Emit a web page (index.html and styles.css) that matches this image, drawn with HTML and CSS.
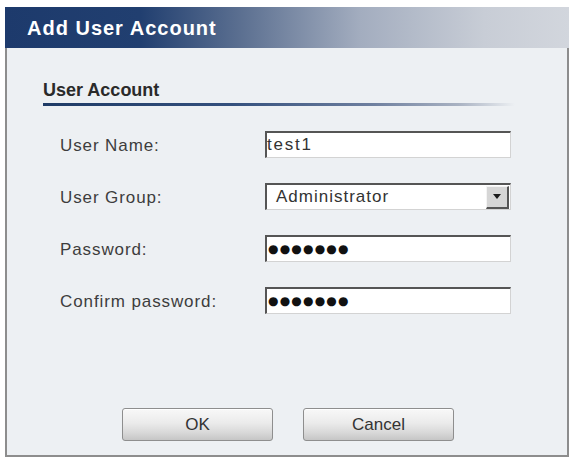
FILE: index.html
```html
<!DOCTYPE html>
<html>
<head>
<meta charset="utf-8">
<link rel="stylesheet" href="styles.css">
</head>
<body>
<div class="dialog">
  <div class="titlebar">Add User Account</div>
  <div class="content">
    <div class="section-title">User Account</div>
    <div class="section-rule"></div>
    <div class="form">
      <label class="label" for="uname">User Name:</label>
      <input class="field" id="uname" type="text" value="test1">
      <label class="label">User Group:</label>
      <div class="combo"><span class="combo-text">Administrator</span><span class="combo-btn"><span class="tri"></span></span></div>
      <label class="label" for="pw">Password:</label>
      <div class="field pw" id="pw">●●●●●●●</div>
      <label class="label" for="pw2">Confirm password:</label>
      <div class="field pw" id="pw2">●●●●●●●</div>
    </div>
    <div class="buttons">
      <button class="btn">OK</button>
      <button class="btn">Cancel</button>
    </div>
  </div>
</div>
</body>
</html>
```
FILE: styles.css
```css
html, body {
  margin: 0;
  padding: 0;
  background: #ffffff;
}
body {
  font-family: "Liberation Sans", Arial, sans-serif;
}
.dialog {
  box-sizing: border-box;
  margin: 7px 0 0 5px;
  width: 564px;
  height: 450px;
  border: 2px solid #8d8d8d;
  border-top-width: 0;
  background: #edf0f3;
  display: flex;
  flex-direction: column;
}
.titlebar {
  height: 41px;
  line-height: 43px;
  padding-left: 22px;
  font-size: 20px;
  font-weight: bold;
  letter-spacing: 1px;
  color: #ffffff;
  background: linear-gradient(to right, #1d3a6c 0%, #213f70 24%, #5c7091 42%, #a3adbf 63%, #c8cdd6 85%, #d2d6dd 100%);
  margin: 0 -2px;
}
.content {
  flex: 1;
  display: flex;
  flex-direction: column;
  padding: 32px 0 14px 36px;
}
.section-title {
  font-size: 18px;
  font-weight: bold;
  line-height: 20px;
  color: #2a2a2a;
}
.section-rule {
  margin-top: 3px;
  width: 472px;
  height: 3px;
  background: linear-gradient(to right, #1f3b66 0%, #34507d 40%, #6f809f 70%, #a9b2c2 88%, rgba(220,224,230,0) 100%);
}
.form {
  margin: 25px 0 0 17px;
  display: grid;
  grid-template-columns: 205px 246px;
  grid-auto-rows: 27px;
  row-gap: 25px;
  align-items: center;
}
.label {
  padding-top: 3px;
  font-size: 17px;
  letter-spacing: 0.9px;
  color: #3d3d3d;
}
.field {
  box-sizing: border-box;
  height: 27px;
  width: 246px;
  margin: 0;
  background: #ffffff;
  border-style: solid;
  border-width: 2px 1px 1px 2px;
  border-color: #555555 #d3d3d3 #d3d3d3 #555555;
  font-family: "Liberation Sans", Arial, sans-serif;
  font-size: 17px;
  letter-spacing: 1.8px;
  color: #333333;
  padding: 0;
  outline: none;
}
.pw {
  display: flex;
  align-items: center;
  padding-left: 1px;
  font-family: "DejaVu Sans", sans-serif;
  font-size: 12px;
  letter-spacing: 1.2px;
  color: #111111;
}
.combo {
  box-sizing: border-box;
  height: 27px;
  width: 246px;
  display: flex;
  align-items: center;
  background: #ffffff;
  border-style: solid;
  border-width: 2px 1px 1px 2px;
  border-color: #555555 #d3d3d3 #d3d3d3 #555555;
}
.combo-text {
  flex: 1;
  padding-left: 9px;
  font-size: 17px;
  letter-spacing: 1px;
  color: #333333;
}
.combo-btn {
  box-sizing: border-box;
  width: 23px;
  height: 23px;
  margin-right: 1px;
  background: #d6d6d6;
  border-style: solid;
  border-width: 1px 2px 2px 1px;
  border-color: #f4f4f4 #555555 #555555 #f4f4f4;
  display: flex;
  align-items: center;
  justify-content: center;
}
.tri {
  width: 0;
  height: 0;
  border-left: 4px solid transparent;
  border-right: 4px solid transparent;
  border-top: 5px solid #1a1a1a;
}
.buttons {
  margin-top: auto;
  margin-left: -36px;
  display: flex;
  justify-content: center;
  gap: 30px;
  padding-left: 2px;
}
.btn {
  box-sizing: border-box;
  width: 151px;
  height: 33px;
  border: 1px solid #8e8e8e;
  border-radius: 3px;
  background: linear-gradient(to bottom, #f8f8f8 0%, #ebebeb 45%, #d9d9d9 75%, #c6c6c6 100%);
  box-shadow: inset 0 1px 0 #ffffff;
  font-family: "Liberation Sans", Arial, sans-serif;
  font-size: 17px;
  color: #333333;
  padding: 0;
}
```
